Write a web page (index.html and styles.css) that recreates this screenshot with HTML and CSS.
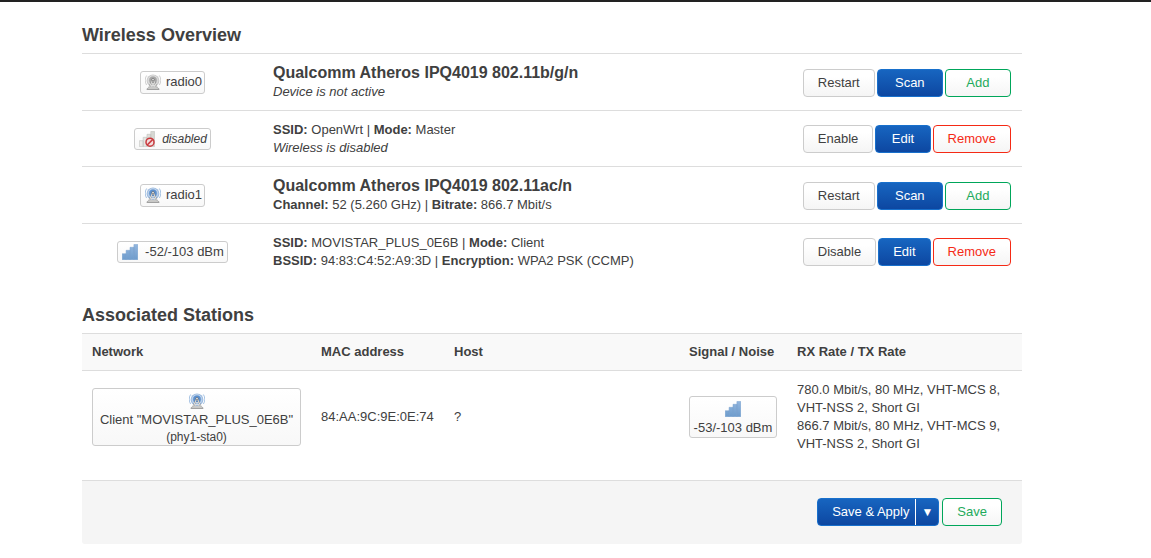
FILE: index.html
```html
<!DOCTYPE html>
<html lang="en">
<head>
<meta charset="utf-8">
<title>Wireless Overview</title>
<link rel="stylesheet" href="styles.css">
</head>
<body>
<svg class="defs" aria-hidden="true">
  <linearGradient id="bar-on" x1="0" y1="0" x2="0" y2="1"><stop offset="0" stop-color="#93b6de"/><stop offset="1" stop-color="#6d9ccc"/></linearGradient>
  <linearGradient id="bar-off" x1="0" y1="0" x2="1" y2="0"><stop offset="0" stop-color="#eeeeea"/><stop offset="1" stop-color="#d3d5d0"/></linearGradient>
  <symbol id="wifi" viewBox="0 0 16 16">
    <path d="M1.600 1.500C-.2 4-.2 8.500 1.600 11M14.400 1.500c1.800 2.500 1.800 7 0 9.500" fill="none" stroke="currentColor" stroke-opacity=".45"/>
    <ellipse cx="8" cy="6.700" rx="6.400" ry="6.200" fill="currentColor" fill-opacity=".5"/>
    <circle cx="8" cy="6.500" r="4.800" fill="none" stroke="#fff" stroke-opacity=".5" stroke-width=".7"/>
    <circle cx="8" cy="6.300" r="3.700" fill="currentColor" fill-opacity=".7"/>
    <path d="M7.500 6 4.200 13.500M8.500 6l3.300 7.500" fill="none" stroke="#777" stroke-width="1.500"/>
    <path d="M7.500 6 4.200 13.500M8.500 6l3.300 7.500" fill="none" stroke="#ededeb" stroke-width=".9"/>
    <path d="M6.300 9.500h3.400M5.500 11.500h5" stroke="#e2e2e0" stroke-width=".8"/>
    <circle cx="8" cy="5.500" r="1.100" fill="#fff" stroke="#555" stroke-width=".6"/>
    <path d="M1.800 15 4 13.200h8l2.200 1.800z" fill="#e8e8e6" stroke="#999" stroke-width=".6"/>
    <path d="M1.800 15.400h12.400" stroke="#888" stroke-width=".8"/>
  </symbol>
  <symbol id="bars" viewBox="0 0 16 16">
    <path d="M.2 9.700h3.900v6.100H.2zM4.100 6.300H8v9.500H4.100zM8 3.300h3.900v12.500H8zM11.900.5h3.900v15.300h-3.900z" fill="url(#bar-on)" stroke="#7ba3cf" stroke-width=".5"/>
  </symbol>
  <symbol id="bars-none" viewBox="0 0 16 16">
    <path d="M.4 9.700h3.800v5.900H.4zM4.200 6.300H8v9.300H4.200zM8 3.300h3.800v12.300H8zM11.800.5h3.800v15.100h-3.800z" fill="url(#bar-off)" stroke="#bfc1bd" stroke-width=".6"/>
    <circle cx="11" cy="11.200" r="4" fill="#f3dddd" stroke="#c9393d" stroke-width="1.500"/>
    <path d="m8.200 14 5.600-5.600" stroke="#c9393d" stroke-width="1.500"/>
  </symbol>
</svg>
<main class="page">
  <section class="section">
    <h2 class="title">Wireless Overview</h2>
    <table class="overview">
      <tr>
        <td class="status"><span class="badge tight"><svg class="icon off"><use href="#wifi"/></svg>radio0</span></td>
        <td><h3 class="device">Qualcomm Atheros IPQ4019 802.11b/g/n</h3><em>Device is not active</em></td>
        <td class="actions"><div class="buttons"><button class="btn">Restart</button><button class="btn primary grow">Scan</button><button class="btn positive grow">Add</button></div></td>
      </tr>
      <tr>
        <td class="status"><span class="badge"><svg class="icon"><use href="#bars-none"/></svg><em class="small">disabled</em></span></td>
        <td><strong>SSID:</strong> OpenWrt | <strong>Mode:</strong> Master<br><em>Wireless is disabled</em></td>
        <td class="actions"><div class="buttons"><button class="btn">Enable</button><button class="btn primary grow">Edit</button><button class="btn negative">Remove</button></div></td>
      </tr>
      <tr>
        <td class="status"><span class="badge tight"><svg class="icon on"><use href="#wifi"/></svg>radio1</span></td>
        <td><h3 class="device">Qualcomm Atheros IPQ4019 802.11ac/n</h3><strong>Channel:</strong> 52 (5.260 GHz) | <strong>Bitrate:</strong> 866.7 Mbit/s</td>
        <td class="actions"><div class="buttons"><button class="btn">Restart</button><button class="btn primary grow">Scan</button><button class="btn positive grow">Add</button></div></td>
      </tr>
      <tr>
        <td class="status"><span class="badge"><svg class="icon"><use href="#bars"/></svg>-52/-103 dBm</span></td>
        <td><strong>SSID:</strong> MOVISTAR_PLUS_0E6B | <strong>Mode:</strong> Client<br><strong>BSSID:</strong> 94:83:C4:52:A9:3D | <strong>Encryption:</strong> WPA2 PSK (CCMP)</td>
        <td class="actions"><div class="buttons"><button class="btn">Disable</button><button class="btn primary grow">Edit</button><button class="btn negative">Remove</button></div></td>
      </tr>
    </table>
  </section>
  <section class="section">
    <h2 class="title">Associated Stations</h2>
    <table class="stations">
      <thead>
        <tr><th class="network">Network</th><th class="mac">MAC address</th><th>Host</th><th class="signal">Signal / Noise</th><th class="rate">RX Rate / TX Rate</th></tr>
      </thead>
      <tbody>
        <tr>
          <td><span class="badge stacked"><svg class="icon on"><use href="#wifi"/></svg><span>Client "MOVISTAR_PLUS_0E6B"</span><span class="small">(phy1-sta0)</span></span></td>
          <td>84:AA:9C:9E:0E:74</td>
          <td>?</td>
          <td><span class="badge stacked"><svg class="icon"><use href="#bars"/></svg><span>-53/-103 dBm</span></span></td>
          <td>780.0 Mbit/s, 80 MHz, VHT-MCS 8, VHT-NSS 2, Short GI<br>866.7 Mbit/s, 80 MHz, VHT-MCS 9, VHT-NSS 2, Short GI</td>
        </tr>
      </tbody>
    </table>
  </section>
  <footer class="page-actions">
    <div class="split">
      <button class="split-main">Save &amp; Apply</button><button class="split-toggle" aria-label="More apply options">▼</button>
    </div>
    <button class="btn positive">Save</button>
  </footer>
</main>
</body>
</html>
```
FILE: styles.css
```css
* { box-sizing: border-box; }

body {
  margin: 0;
  border-top: 2px solid #222;
  background: #fff;
  color: #404040;
  font: 13px/18px "Liberation Sans", Arial, sans-serif;
}

.defs { position: absolute; width: 0; height: 0; }

.page { padding: 15px 129px 14px 82px; }

.section { margin-bottom: 18px; }

.title { margin: 0; font-size: 18px; line-height: 36px; }

table { width: 100%; border-spacing: 0; }

td, th {
  padding: 10px 10px 9px;
  border-top: 1px solid #ddd;
  text-align: left;
  vertical-align: middle;
}

.overview .status { width: 181px; padding: 0 10px; text-align: center; }
.status .badge { vertical-align: middle; }

.overview .actions { width: 229px; padding: 1px 11px 0 10px; }

.device { margin: 0 0 1px; font-size: 16px; line-height: 19px; }
.overview td:has(.device) { padding-top: 9px; }

.badge {
  display: inline-flex;
  align-items: center;
  gap: 7px;
  min-height: 22px;
  padding: 1px 3px 1px 4px;
  border: 1px solid #ccc;
  border-radius: 3px;
  background: linear-gradient(#fff, #f8f8f8);
  white-space: nowrap;
}
.badge.tight { gap: 5px; padding: 1px 2px 2px 4px; }
.badge.stacked { display: flex; flex-direction: column; gap: 0; padding: 4px 3px 0; }
.stacked .icon { margin-bottom: 2px; }

.small { font-size: 12px; line-height: 16px; }

.icon { width: 16px; height: 16px; flex: none; }
.icon.on { color: #3f7cc4; }
.icon.off { color: #999; }

.buttons { display: flex; gap: 2px; }

.btn {
  padding: 4px 14px;
  border: 1px solid #ccc;
  border-radius: 4px;
  background: linear-gradient(#fff, #fff 25%, #f5f5f5);
  color: #404040;
  font: inherit;
}
.btn.grow { flex: 1; }
.btn.primary {
  border-color: #1870cc;
  background: linear-gradient(#1765c0, #0d47a1);
  color: #fff;
}
.btn.positive { border-color: #00a65a; color: #1eaa5c; }
.btn.negative { border-color: #f52a15; color: #f52a15; }

.stations th { padding: 9px 10px; background: #f9f9f9; }
.network { width: 229px; }
.mac { width: 133px; }
.signal { width: 108px; white-space: nowrap; }
.rate { width: 235px; }

.page-actions {
  display: flex;
  justify-content: flex-end;
  gap: 3px;
  padding: 17px 20px 18px;
  border-top: 1px solid #ddd;
  border-radius: 0 0 3px 3px;
  background: #f5f5f5;
}

.split {
  display: flex;
  border: 1px solid #1870cc;
  border-radius: 4px;
  background: linear-gradient(#1765c0, #0d47a1);
}
.split button {
  border: 0;
  background: none;
  color: #fff;
  font: inherit;
}
.split .split-main { padding: 4px 6px 4px 14px; }
.split .split-toggle { padding: 4px 5px; border-left: 1px solid #fff; font-size: 12px; }
```
